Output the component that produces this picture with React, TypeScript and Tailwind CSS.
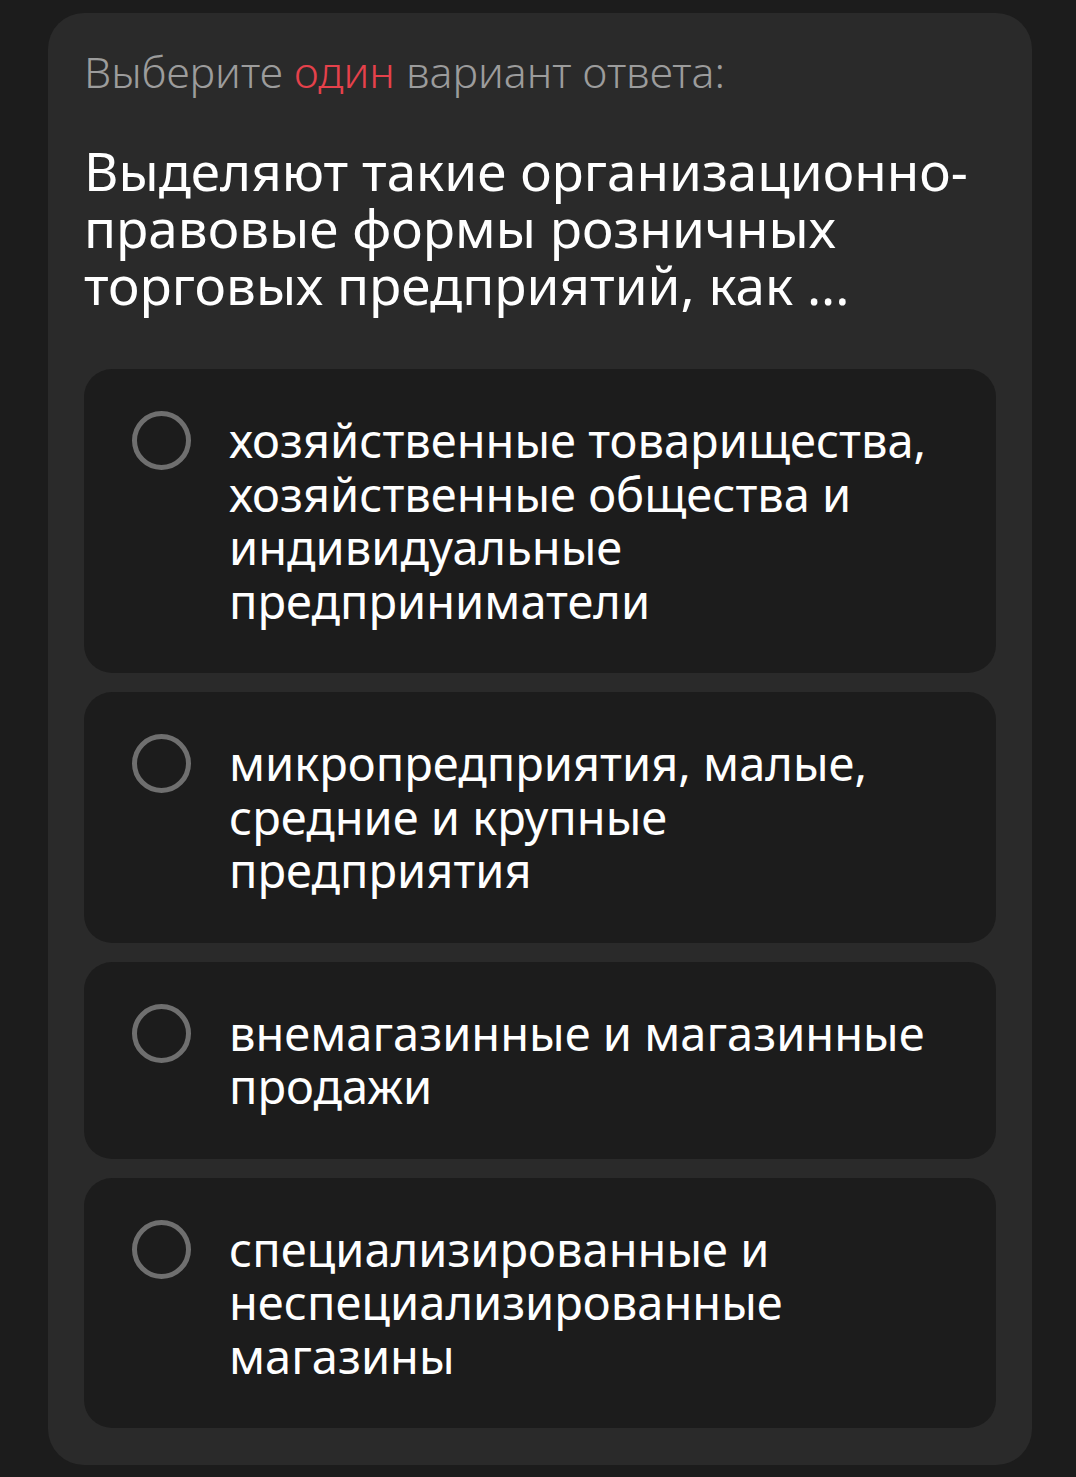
import { useState } from "react";

type Option = { id: string; text: string };

const options: Option[] = [
  {
    id: "a",
    text: "хозяйственные товарищества, хозяйственные общества и индивидуальные предприниматели",
  },
  { id: "b", text: "микропредприятия, малые, средние и крупные предприятия" },
  { id: "c", text: "внемагазинные и магазинные продажи" },
  { id: "d", text: "специализированные и неспециализированные магазины" },
];

const font = { fontFamily: '"Noto Sans", "Open Sans", sans-serif' };

function Radio({ checked }: { checked: boolean }) {
  return (
    <div className="flex h-[53.5px] w-[59px] shrink-0 items-center">
      <div className="flex h-[59px] w-[59px] items-center justify-center rounded-full border-[5px] border-[#6f6f6f]">
        {checked && <div className="h-[29px] w-[29px] rounded-full bg-[#e5414b]" />}
      </div>
    </div>
  );
}

export default function App() {
  const [selected, setSelected] = useState<string | null>(null);

  return (
    <div className="min-h-[1477px] bg-[#1c1c1c] pl-[48px] pr-[44px] pt-[13px] pb-[12px]" style={font}>
      <div className="rounded-[36px] bg-[#2a2a2a] px-[36px] pt-[34px] pb-[37px]">
        {/* prompt line */}
        <p className="text-[43px] font-light leading-[50px] text-[#9c9c9c]">
          Выберите <span className="text-[#e5414b]">один</span> вариант ответа:
        </p>

        {/* question */}
        <h1 className="mt-[45px] text-[53px] font-normal leading-[57px] text-white">
          Выделяют такие организационно-правовые формы розничных торговых предприятий, как ...
        </h1>

        {/* answer list */}
        <div className="mt-[56px] flex flex-col gap-[19px]">
          {options.map((o) => (
            <button
              key={o.id}
              type="button"
              onClick={() => setSelected(o.id)}
              className="flex items-start gap-[38px] rounded-[28px] bg-[#1c1c1c] py-[45px] pl-[48px] pr-[40px] text-left"
            >
              <Radio checked={selected === o.id} />
              <span className="text-[47px] leading-[53.5px] text-white">{o.text}</span>
            </button>
          ))}
        </div>
      </div>
    </div>
  );
}
